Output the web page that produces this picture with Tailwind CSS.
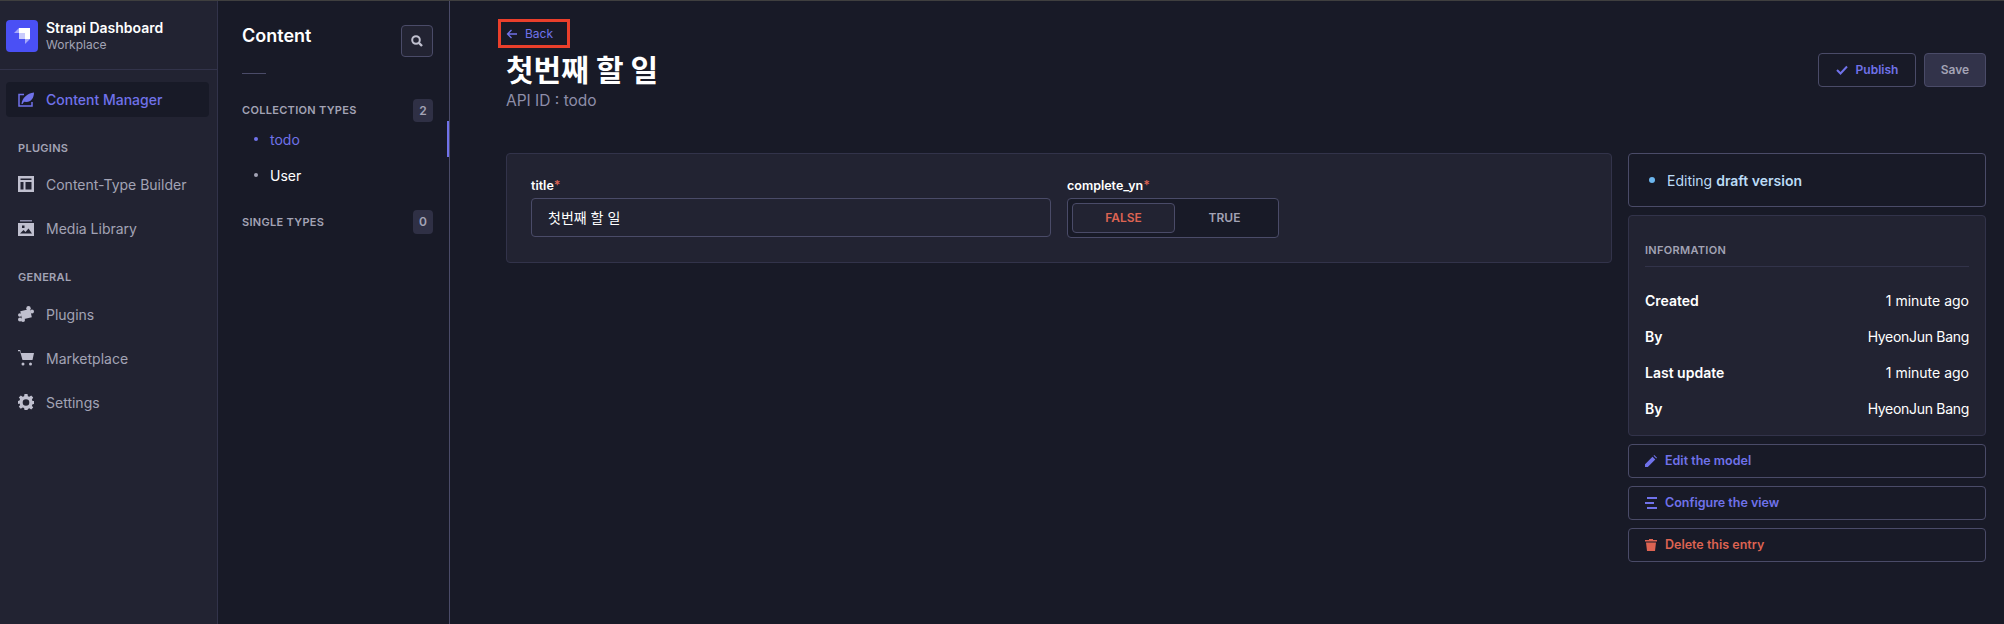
<!DOCTYPE html>
<html>
<head>
	<title>Strapi Dashboard</title>
	<meta charset="UTF-8">
	<script src="https://cdn.jsdelivr.net/npm/@tailwindcss/browser@4"></script>
</head>
<body class="bg-[#181a27] text-white font-['Inter','Noto_Sans_CJK_KR',sans-serif] overflow-hidden">
	<div class="h-[1px] bg-[#3f3f3f]"></div>
	<div class="flex h-[623px]">
		<!-- main nav -->
		<nav class="w-[218px] shrink-0 bg-[#222332] border-r border-[#32334a]">
			<div class="h-[69px] flex items-center gap-[8px] pl-[6px] pt-[1px] border-b border-[#32334a]">
				<div class="w-[32px] h-[32px] rounded-[4px] bg-[#4a50f5] flex items-center justify-center">
					<svg width="16" height="16" viewBox="0 0 16 16"><path d="M5 0h11v11h-5V5H5z" fill="#fff"/><path d="M5 5h6v6H5z" fill="#fff" fill-opacity=".7"/><path d="M0 5l5-5v5z" fill="#fff" fill-opacity=".5"/><path d="M11 11h5l-5 5z" fill="#fff" fill-opacity=".5"/></svg>
				</div>
				<div>
					<p class="text-[14px] leading-[18px] font-semibold">Strapi Dashboard</p>
					<p class="text-[12px] leading-[16px] text-[#a3a3b5]">Workplace</p>
				</div>
			</div>
			<div class="px-[6px] pt-[12px]">
				<a class="h-[35px] w-[203px] rounded-[4px] bg-[#181a27] flex items-center gap-[12px] pl-[12px] text-[14px] font-medium text-[#7072ea]">
					<svg width="16" height="16" viewBox="0 0 16 16" fill="none"><path d="M6 2.500H1v11.500h13V10" stroke="#7072ea" stroke-width="1.500"/><path d="M3.500 12C4 6.500 9 1 16 .5c0 5.500-3 9.500-7.500 9.500L6 9.700 4.500 12z" fill="#7072ea"/></svg>
					Content Manager
				</a>
				<p class="mt-[24px] pl-[12px] text-[11px] leading-[14px] font-semibold tracking-[.3px] text-[#a3a3b5]">PLUGINS</p>
				<a class="mt-[13px] h-[32px] flex items-center gap-[12px] pl-[12px] text-[14px] text-[#a3a3b5]">
					<svg width="16" height="16" viewBox="0 0 16 16"><path fill-rule="evenodd" d="M0 0h16v16H0zM2.500 6v7.500h3V6zm5 0v7.500h6V6zm-5-3.500V4h11V2.500z" fill="#c0c0cf"/></svg>
					Content-Type Builder
				</a>
				<a class="mt-[12px] h-[32px] flex items-center gap-[12px] pl-[12px] text-[14px] text-[#a3a3b5]">
					<svg width="16" height="16" viewBox="0 0 16 16"><path d="M2 0h12v1.500H2z" fill="#8e8ea9"/><path fill-rule="evenodd" d="M0 3h16v13H0zm2 10.500h12l-3.500-5-3 3.500-2-2zM4 5.500h2.500V8H4z" fill="#c0c0cf"/></svg>
					Media Library
				</a>
				<p class="mt-[26px] pl-[12px] text-[11px] leading-[14px] font-semibold tracking-[.3px] text-[#a3a3b5]">GENERAL</p>
				<a class="mt-[14px] h-[32px] flex items-center gap-[12px] pl-[12px] text-[14px] text-[#a3a3b5]">
					<svg width="16" height="16" viewBox="0 0 16 16" fill="#c0c0cf"><rect x="3" y="4" width="10" height="8.500" transform="rotate(-12 8 8)"/><circle cx="10.500" cy="2.200" r="2.200"/><circle cx="14" cy="5.500" r="2"/><circle cx="1.800" cy="9" r="1.800"/><circle cx="5" cy="14" r="2"/><circle cx="2" cy="13.500" r="2"/></svg>
					Plugins
				</a>
				<a class="mt-[12px] h-[32px] flex items-center gap-[12px] pl-[12px] text-[14px] text-[#a3a3b5]">
					<svg width="16" height="16" viewBox="0 0 16 16"><path d="M0 0h2.200l.8 3H16l-1.500 7H4.500L2 1.200H0z" fill="#c0c0cf"/><circle cx="5" cy="14" r="1.500" fill="#c0c0cf"/><circle cx="12.500" cy="14" r="1.500" fill="#c0c0cf"/></svg>
					Marketplace
				</a>
				<a class="mt-[12px] h-[32px] flex items-center gap-[12px] pl-[12px] text-[14px] text-[#a3a3b5]">
					<svg width="16" height="16" viewBox="0 0 16 16"><path fill-rule="evenodd" d="M6.500 0h3l.4 2.200 1.400.6L13.200 1.500l2 2.100-1.300 1.900.6 1.400L16 7v3l-1.500.3-.6 1.400 1.300 1.800-2 2.100-1.900-1.300-1.400.6L9.500 16h-3l-.4-1.900-1.400-.6-1.900 1.300-2-2.100 1.300-1.800-.6-1.400L0 10V7l1.500-.6.6-1.400L.8 3.600l2-2.100 1.900 1.300 1.400-.6zM8 5.200a3.300 3.300 0 100 6.600 3.300 3.300 0 000-6.600z" fill="#c0c0cf"/></svg>
					Settings
				</a>
			</div>
		</nav>
		<!-- content sub nav -->
		<aside class="relative w-[232px] shrink-0 border-r border-[#4a4b68] pl-[24px] pr-[16px]">
			<div class="h-[56px] pt-[24px] flex justify-between">
				<h2 class="text-[18px] leading-[24px] font-semibold -mt-[1px]">Content</h2>
				<button class="w-[32px] h-[32px] rounded-[4px] border border-[#4a4b68] bg-[#222332] flex items-center justify-center">
					<svg width="12" height="12" viewBox="0 0 12 12" fill="none"><circle cx="5" cy="5" r="3.800" stroke="#c0c0cf" stroke-width="2"/><path d="M8 8l3 3" stroke="#c0c0cf" stroke-width="2.400"/></svg>
				</button>
			</div>
			<div class="w-[24px] h-[1px] bg-[#4a4b68] mt-[16px]"></div>
			<div class="mt-[25px] -mb-[1px] flex items-center justify-between">
				<span class="text-[11px] font-semibold tracking-[.3px] text-[#a3a3b5]">COLLECTION TYPES</span>
				<span class="w-[20px] h-[23px] rounded-[4px] bg-[#2f3045] flex items-center justify-center text-[12px] font-semibold text-[#a3a3b5]">2</span>
			</div>
			<a class="h-[36px] flex items-center pl-[12px] gap-[12px] text-[14px] text-[#7072ea]"><span class="w-[4px] h-[4px] rounded-full bg-[#7072ea]"></span>todo</a>
			<a class="h-[36px] flex items-center pl-[12px] gap-[12px] text-[14px]"><span class="w-[4px] h-[4px] rounded-full bg-[#a3a3b5]"></span>User</a>
			<div class="mt-[17px] flex items-center justify-between">
				<span class="text-[11px] font-semibold tracking-[.3px] text-[#a3a3b5]">SINGLE TYPES</span>
				<span class="w-[20px] h-[24px] rounded-[4px] bg-[#2f3045] flex items-center justify-center text-[12px] font-semibold text-[#a3a3b5]">0</span>
			</div>
			<div class="absolute right-0 top-[120px] w-[2px] h-[36px] bg-[#7072ea]"></div>
		</aside>
		<!-- edit view -->
		<main class="flex-1 min-w-0 pl-[56px] pr-[18px]">
			<a class="-ml-[8px] mt-[18px] h-[29px] w-[72px] border-[3px] border-[#ea3f2b] flex items-center gap-[7px] pl-[5px] text-[12px] text-[#7072ea]">
				<svg width="12" height="10" viewBox="0 0 12 10" fill="none"><path d="M11 5H1.500M5.500 1L1.500 5l4 4" stroke="#7072ea" stroke-width="1.300"/></svg>
				Back
			</a>
			<div class="flex justify-between items-start">
				<div>
					<h1 class="text-[30px] leading-[40px] font-bold mt-[2px]">첫번째 할 일</h1>
					<p class="text-[15.5px] leading-[20px] text-[#8e8ea9] mt-[1px]">API ID : todo</p>
				</div>
				<div class="flex gap-[8px] mt-[5px]">
					<button class="w-[98px] h-[34px] rounded-[4px] border border-[#4a4b68] flex items-center justify-center gap-[8px] text-[12px] font-semibold text-[#7072ea]">
						<svg width="12" height="10" viewBox="0 0 12 10" fill="none"><path d="M1 5l3.500 3.500L11 1.500" stroke="#7072ea" stroke-width="2"/></svg>
						Publish
					</button>
					<button class="w-[62px] h-[34px] rounded-[4px] border border-[#4a4b68] bg-[#32334a] text-[12px] font-semibold text-[#a3a3b5]">Save</button>
				</div>
			</div>
			<div class="mt-[42px] flex gap-[16px] items-start">
				<section class="flex-1 h-[110px] rounded-[4px] bg-[#222332] border border-[#32334a] px-[24px] pt-[24px] flex gap-[16px]">
					<div class="w-[520px]">
						<p class="text-[12.5px] leading-[16px] font-semibold mb-[4px]">title<span class="text-[#dd6352]">*</span></p>
						<div class="h-[39px] rounded-[4px] border border-[#4a4b68] flex items-center pl-[16px] text-[14px]">첫번째 할 일</div>
					</div>
					<div>
						<p class="text-[12.5px] leading-[16px] font-semibold mb-[4px]">complete_yn<span class="text-[#dd6352]">*</span></p>
						<div class="w-[212px] h-[40px] rounded-[4px] border border-[#4a4b68] bg-[#181a27] p-[4px] flex text-[12px] font-semibold">
							<span class="w-[103px] rounded-[4px] border border-[#4a4b68] bg-[#222332] flex items-center justify-center text-[#dd6352]">FALSE</span>
							<span class="flex-1 flex items-center justify-center text-[#a3a3b5]">TRUE</span>
						</div>
					</div>
				</section>
				<aside class="w-[358px] shrink-0 flex flex-col gap-[8px]">
					<div class="h-[54px] rounded-[4px] border border-[#4a4b68] flex items-center gap-[12px] pl-[20px] text-[14px] text-[#bcdcf6]">
						<span class="w-[6px] h-[6px] rounded-full bg-[#6cb6ee]"></span>
						<span>Editing <b class="font-semibold">draft version</b></span>
					</div>
					<div class="h-[221px] rounded-[4px] border border-[#32334a] bg-[#222332] px-[16px] pt-[27px]">
						<p class="text-[11px] leading-[14px] font-semibold tracking-[.3px] text-[#a3a3b5] pb-[9px] border-b border-[#32334a]">INFORMATION</p>
						<div class="mt-[15px] flex flex-col text-[14px]">
							<div class="h-[36px] flex items-center justify-between"><b class="font-semibold">Created</b><span>1 minute ago</span></div>
							<div class="h-[36px] flex items-center justify-between"><b class="font-semibold">By</b><span class="tracking-[-.3px]">HyeonJun Bang</span></div>
							<div class="h-[36px] flex items-center justify-between"><b class="font-semibold">Last update</b><span>1 minute ago</span></div>
							<div class="h-[36px] flex items-center justify-between"><b class="font-semibold">By</b><span class="tracking-[-.3px]">HyeonJun Bang</span></div>
						</div>
					</div>
					<a class="h-[34px] rounded-[4px] border border-[#4a4b68] flex items-center gap-[8px] pl-[16px] text-[12.5px] font-semibold text-[#7072ea]">
						<svg width="12" height="12" viewBox="0 0 12 12"><path d="M0 12V9.200L7.500 1.700l2.800 2.800L2.800 12zM8.500.700l.7-.7L12 2.800l-.7.700z" fill="#7072ea"/></svg>
						Edit the model
					</a>
					<a class="h-[34px] rounded-[4px] border border-[#4a4b68] flex items-center gap-[8px] pl-[16px] text-[12.5px] font-semibold text-[#7072ea]">
						<svg width="12" height="12" viewBox="0 0 12 12"><path d="M2 0h10v2H2zM0 5h9v2H0zM2 10h10v2H2z" fill="#7072ea"/></svg>
						Configure the view
					</a>
					<a class="h-[34px] rounded-[4px] border border-[#4a4b68] flex items-center gap-[8px] pl-[16px] text-[12.5px] font-semibold text-[#dd6352]">
						<svg width="12" height="12" viewBox="0 0 12 12"><path d="M4 0h4v1h4v1.500H0V1h4zM1 3.500h10L10 12H2z" fill="#dd6352"/></svg>
						Delete this entry
					</a>
				</aside>
			</div>
		</main>
	</div>
</body>
</html>
